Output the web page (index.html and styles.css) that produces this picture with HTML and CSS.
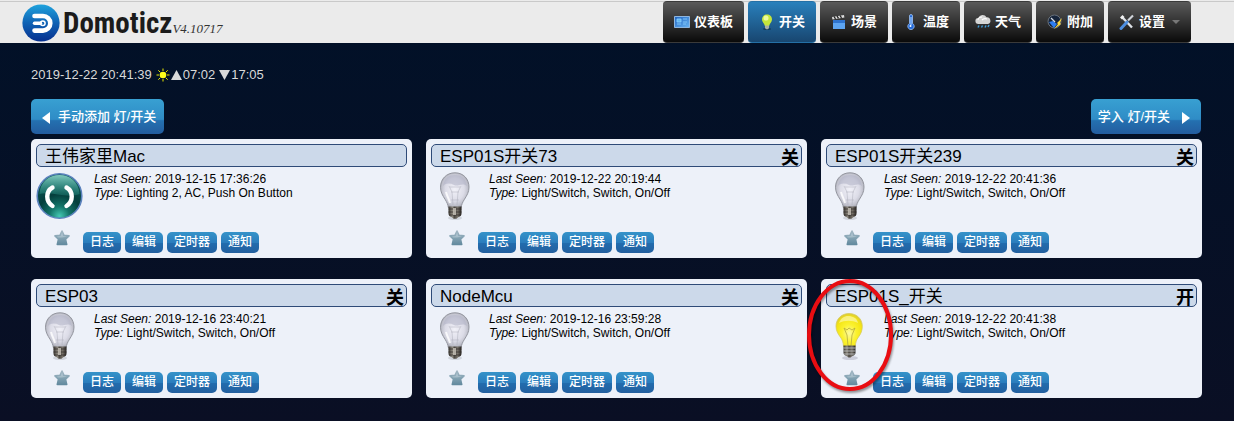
FILE: index.html
```html
<!DOCTYPE html>
<html lang="zh-CN">
<head>
<meta charset="utf-8">
<title>Domoticz</title>
<link rel="stylesheet" href="styles.css">
</head>
<body>
<svg class="sprite" aria-hidden="true">
  <defs>
    <radialGradient id="glass" cx="50%" cy="48%" r="55%">
      <stop offset="0" stop-color="#f1f1f8"/><stop offset=".6" stop-color="#dcdce7"/><stop offset=".85" stop-color="#bfc0cb"/><stop offset="1" stop-color="#9c9ea8"/>
    </radialGradient>
    <radialGradient id="glow" cx="50%" cy="60%" r="60%">
      <stop offset="0" stop-color="#fdf9a0"/><stop offset=".45" stop-color="#fbf22f"/><stop offset=".85" stop-color="#f3e312"/><stop offset="1" stop-color="#d9c93a"/>
    </radialGradient>
    <linearGradient id="metal">
      <stop offset="0" stop-color="#37342f"/><stop offset=".3" stop-color="#8f8a80"/><stop offset=".45" stop-color="#4a4640"/><stop offset=".7" stop-color="#77726a"/><stop offset="1" stop-color="#25221f"/>
    </linearGradient>
    <linearGradient id="starfill" x2="0" y2="1">
      <stop offset="0" stop-color="#a3b7c4"/><stop offset=".5" stop-color="#84a3b3"/><stop offset="1" stop-color="#648b9f"/>
    </linearGradient>
    <linearGradient id="logofill" x2="0" y2="1">
      <stop offset="0" stop-color="#1fa3dd"/><stop offset=".5" stop-color="#0f62b4"/><stop offset="1" stop-color="#06308f"/>
    </linearGradient>
    <radialGradient id="orb" cx="50%" cy="95%" r="90%">
      <stop offset="0" stop-color="#43c8b2"/><stop offset=".25" stop-color="#137468"/><stop offset=".55" stop-color="#043e3c"/><stop offset="1" stop-color="#0d5c58"/>
    </radialGradient>
    <linearGradient id="shine" x2="0" y2="1">
      <stop offset="0" stop-color="#9fe3d6" stop-opacity=".8"/><stop offset="1" stop-color="#2fa697" stop-opacity=".3"/>
    </linearGradient>
    <linearGradient id="sky" x2="1" y2="1"><stop offset="0" stop-color="#1f63c0"/><stop offset="1" stop-color="#69b4f2"/></linearGradient>
  </defs>
  <symbol id="bulb-off" viewBox="0 0 48 48">
    <ellipse cx="24" cy="46" rx="7" ry="2" fill="#b5b9c2" opacity=".5"/>
    <path d="M24 .8C15.500.8 9.500 7 9.500 15.200c0 5 2.200 8.300 4.500 12 2 3.200 3 5.500 3.300 8.300h12.900c.3-2.800 1.300-5.100 3.300-8.300 2.300-3.700 4.500-7 4.500-12C38 7 32.500.8 24 .8z" fill="url(#glass)" stroke="#94969f" stroke-width="1"/>
    <path d="M12 14C13 6 18 3 24 3s11 3 12 11c-5-4-9 1-13-1s-8-2-11 1z" fill="#aeb0c4" opacity=".55"/>
    <path d="M18 14l3 6 1 13M30 14l-3 6-1 13M19 15h10M20 20h8M20 28h8" fill="none" stroke="#a5a8b4" stroke-width=".8" opacity=".55"/>
    <path d="M15 20c1 4 3 7 4 11" stroke="#fff" stroke-width="2" fill="none" opacity=".8"/>
    <path d="M17.500 34.500h13v7c0 2-1 3-3 3.500l-2 1.800h-3l-2-1.800c-2-.5-3-1.500-3-3.500z" fill="url(#metal)"/>
    <path d="M17.500 37h13M17.500 40h13M18 43h12" stroke="#2e2a27" stroke-width=".7"/>
    <path d="M22 36h3v7h-3z" fill="#ded9cf" opacity=".7"/>
  </symbol>
  <symbol id="bulb-on" viewBox="0 0 48 48">
    <ellipse cx="24" cy="46" rx="8" ry="2" fill="#aab" opacity=".5"/>
    <path d="M23 1.500C15.500 1.500 10 7 10 14.200c0 4.500 2 7.800 4.300 10.800 2 2.700 3 5.300 3.200 9.500h11.800c.2-4.200 1.200-6.800 3.200-9.500 2.300-3 3.800-6.300 3.800-10.800C36.300 7 30.800 1.500 23 1.500z" fill="url(#glow)" stroke="#d8cb5c" stroke-width=".8"/>
    <path d="M13 11c2-5 5-7 9-7 5 0 9 2 10 7-6-3-13-3-19 0z" fill="#fff" opacity=".45"/>
    <path d="M18 16l3 7 1 11M29 16l-3 7-1 11M18 16l3 2 2-2 3 2 3-2" fill="none" stroke="#b3a940" stroke-width=".8"/>
    <path d="M17.500 33.500h12v7c0 2-1 3-3 3.500l-2 1.500h-2l-2-1.500c-2-.5-3-1.500-3-3.500z" fill="url(#metal)"/>
    <path d="M17.500 36h12M17.500 39h12M18 42h11" stroke="#c7c9cc" stroke-width=".8"/>
  </symbol>
  <symbol id="star" viewBox="0 0 16 16">
    <path d="M8 1l2 4.400 5 .5-3.500 3.400 1.200 5.100H3.300l1.200-5.100L1 5.900l5-.5z" fill="url(#starfill)" stroke="url(#starfill)" stroke-width="1.600" stroke-linejoin="round"/>
    <path d="M8 2.500l1.300 3.500 3.700.5C9 7.500 6 8 3.500 7.200L3 6.500 6.600 6z" fill="#d3e0e8" opacity=".4"/>
  </symbol>
</svg>

<header class="topbar">
  <div class="brand">
    <svg class="brand-mark" viewBox="0 0 38 38" aria-hidden="true">
      <circle cx="19" cy="19" r="18.600" fill="url(#logofill)"/>
      <path d="M12.500 12H21a7.300 7.300 0 0 1 0 14.600h-8.500" fill="none" stroke="#fff" stroke-width="4.600" stroke-linecap="round"/>
      <path d="M12.500 19.300h6" stroke="#fff" stroke-width="3.400" stroke-linecap="round"/>
      <circle cx="20.800" cy="19.300" r="2.300" fill="none" stroke="#fff" stroke-width="1.500"/>
    </svg>
    <span class="brand-name">Domoticz</span>
    <span class="brand-version">V4.10717</span>
  </div>
  <nav class="menu">
    <a class="menu-item" href="#dashboard"><svg viewBox="0 0 16 16"><path d="M.5 2.500h15v11H.5z" fill="url(#sky)" stroke="#8eb6df"/><path d="M3 5h4v3H3zM3 10h4M9 5h4M9 8h4M9 10h3" fill="#62b7ef" stroke="#8bd0ff" stroke-width=".8"/></svg>仪表板</a>
    <a class="menu-item active" href="#switches"><svg viewBox="0 0 16 16"><ellipse cx="8" cy="15" rx="4" ry="1" fill="#123a5a"/><path d="M8 .5C5 .5 3 2.600 3 5.400 3 8 5.400 9.200 5.900 12h4.200C10.600 9.200 13 8 13 5.400 13 2.600 11 .5 8 .5z" fill="#c4e63b"/><ellipse cx="7" cy="4" rx="2.500" ry="2.600" fill="#ecfb9f"/><path d="M6 11.500h4V14l-1 1.200H7L6 14z" fill="#aab0a5"/></svg>开关</a>
    <a class="menu-item" href="#scenes"><svg viewBox="0 0 16 16"><path d="M2 6h12v9H2z" fill="#5da5f2"/><path d="M2 6h12v3H2z" fill="#2f74cf"/><path d="M1 3l12-2 .4 2.400L1.500 5.500z" fill="#ddd"/><path d="M3 2.500l1.500 2.400M6 2l1.500 2.400M9 1.500l1.500 2.400" stroke="#222" stroke-width="1.300"/></svg>场景</a>
    <a class="menu-item" href="#temperature"><svg viewBox="0 0 16 16"><path d="M6.500 2a1.500 1.500 0 0 1 3 0v7.500a3.200 3.200 0 1 1-3 0z" fill="#2268d8" stroke="#9fc6fa" stroke-width=".8"/><path d="M8 3v8" stroke="#bfe0ff"/><circle cx="7.500" cy="12" r="1" fill="#fff"/></svg>温度</a>
    <a class="menu-item" href="#weather"><svg viewBox="0 0 16 16"><path d="M3.500 10a3 3 0 0 1-.2-6A4.500 4.500 0 0 1 11.500 3.200 3.500 3.500 0 0 1 13 10z" fill="#d4d4d4"/><path d="M3 6a4 3 0 0 1 4-3M7 6a4 3 0 0 1 5-1" stroke="#fff" stroke-width="1.200" fill="none"/><path d="M4 11.500l-1 2M7.500 11.500l-1 2M11 11.500l-1 2M14 11l-1 2" stroke="#3f9bd8" stroke-width="1.400"/></svg>天气</a>
    <a class="menu-item" href="#utility"><svg viewBox="0 0 16 16"><circle cx="7.500" cy="7.500" r="6.500" fill="#17253b" stroke="#68717c"/><path d="M2 8l5 6 3-4-4-3z" fill="#2d7df0"/><path d="M4 4l4 4" stroke="#d5dbe3" stroke-width="1.200"/><path d="M15 4l-5 5 1 1-4 5 7-5-1-1z" fill="#ffd83b"/></svg>附加</a>
    <a class="menu-item" href="#setup"><svg viewBox="0 0 16 16"><path d="M3 3l10 10.500" stroke="#dfe3e8" stroke-width="2.400"/><path d="M1 3.500L3.500 1l2 2-2.500 2.500z" fill="#f1f1f1"/><path d="M14 1.500l-5 5" stroke="#d0d4da" stroke-width="2.200"/><path d="M8 8l-6 6.500" stroke="#4d8ee0" stroke-width="3" stroke-linecap="round"/></svg>设置<i class="caret"></i></a>
  </nav>
</header>

<main class="page">
  <p class="clock"><span>2019-12-22 20:41:39</span>
    <svg class="sun" viewBox="0 0 14 14" role="img" aria-label="日照"><circle cx="7" cy="7" r="3.300" fill="#ffff1a"/><path d="M7 .5v2.500M7 11v2.500M.5 7H3M11 7h2.500M2.300 2.300l1.900 1.900M9.800 9.800l1.900 1.900M11.700 2.300L9.800 4.200M4.200 9.800l-1.900 1.900" stroke="#e8e800" stroke-width="1"/></svg>
    <span class="sun-time"><svg viewBox="0 0 11 10" aria-hidden="true"><path d="M5.500 0L11 10H0z"/></svg>07:02</span>
    <span class="sun-time"><svg viewBox="0 0 11 10" aria-hidden="true"><path d="M0 0h11L5.500 10z"/></svg>17:05</span></p>

  <div class="toolbar">
    <button class="tool" type="button"><svg viewBox="0 0 8 12" aria-hidden="true"><path d="M8 0v12L0 6z"/></svg>手动添加 灯/开关</button>
    <button class="tool tool-next" type="button">学入 灯/开关<svg viewBox="0 0 8 12" aria-hidden="true"><path d="M0 0v12l8-6z"/></svg></button>
  </div>

  <div class="devices">
    <article class="card">
      <header class="card-head"><h2>王伟家里Mac</h2></header>
      <svg class="device-icon" viewBox="0 0 48 48" role="img" aria-label="按钮">
        <circle cx="23.500" cy="24" r="22.300" fill="url(#orb)" stroke="#5b82bd" stroke-width="1.600"/>
        <path d="M3.500 22C4 10 13 3 23.500 3S43 10 43.500 22C32 27 15 19 3.500 22z" fill="url(#shine)"/>
        <path d="M16.500 15.500c-7 4-7 14 0 18.500M30.500 15.500c7 4 7 14 0 18.500" fill="none" stroke="#fff" stroke-width="4.400" stroke-linecap="round"/>
      </svg>
      <div class="info"><p><em>Last Seen:</em> 2019-12-15 17:36:26</p><p><em>Type:</em> Lighting 2, AC, Push On Button</p></div>
      <svg class="star"><use href="#star"/></svg>
      <div class="actions"><button type="button">日志</button><button type="button">编辑</button><button type="button">定时器</button><button type="button">通知</button></div>
    </article>
    <article class="card">
      <header class="card-head"><h2>ESP01S开关73</h2><strong>关</strong></header>
      <svg class="device-icon"><use href="#bulb-off"/></svg>
      <div class="info"><p><em>Last Seen:</em> 2019-12-22 20:19:44</p><p><em>Type:</em> Light/Switch, Switch, On/Off</p></div>
      <svg class="star"><use href="#star"/></svg>
      <div class="actions"><button type="button">日志</button><button type="button">编辑</button><button type="button">定时器</button><button type="button">通知</button></div>
    </article>
    <article class="card">
      <header class="card-head"><h2>ESP01S开关239</h2><strong>关</strong></header>
      <svg class="device-icon"><use href="#bulb-off"/></svg>
      <div class="info"><p><em>Last Seen:</em> 2019-12-22 20:41:36</p><p><em>Type:</em> Light/Switch, Switch, On/Off</p></div>
      <svg class="star"><use href="#star"/></svg>
      <div class="actions"><button type="button">日志</button><button type="button">编辑</button><button type="button">定时器</button><button type="button">通知</button></div>
    </article>
    <article class="card">
      <header class="card-head"><h2>ESP03</h2><strong>关</strong></header>
      <svg class="device-icon"><use href="#bulb-off"/></svg>
      <div class="info"><p><em>Last Seen:</em> 2019-12-16 23:40:21</p><p><em>Type:</em> Light/Switch, Switch, On/Off</p></div>
      <svg class="star"><use href="#star"/></svg>
      <div class="actions"><button type="button">日志</button><button type="button">编辑</button><button type="button">定时器</button><button type="button">通知</button></div>
    </article>
    <article class="card">
      <header class="card-head"><h2>NodeMcu</h2><strong>关</strong></header>
      <svg class="device-icon"><use href="#bulb-off"/></svg>
      <div class="info"><p><em>Last Seen:</em> 2019-12-16 23:59:28</p><p><em>Type:</em> Light/Switch, Switch, On/Off</p></div>
      <svg class="star"><use href="#star"/></svg>
      <div class="actions"><button type="button">日志</button><button type="button">编辑</button><button type="button">定时器</button><button type="button">通知</button></div>
    </article>
    <article class="card">
      <header class="card-head"><h2>ESP01S_开关</h2><strong>开</strong></header>
      <svg class="device-icon"><use href="#bulb-on"/></svg>
      <div class="info"><p><em>Last Seen:</em> 2019-12-22 20:41:38</p><p><em>Type:</em> Light/Switch, Switch, On/Off</p></div>
      <svg class="star"><use href="#star"/></svg>
      <div class="actions"><button type="button">日志</button><button type="button">编辑</button><button type="button">定时器</button><button type="button">通知</button></div>
      <svg class="highlight" viewBox="0 0 88 114" aria-hidden="true"><ellipse cx="43" cy="56" rx="41" ry="54" fill="none" stroke="#e90d12" stroke-width="4"/></svg>
    </article>
  </div>
</main>
</body>
</html>
```
FILE: styles.css
```css
* { box-sizing: border-box; }

body {
  margin: 0;
  min-height: 100vh;
  background: linear-gradient(#011128, #0a0f24);
  color: #000;
  font-family: "Liberation Sans", "Noto Sans CJK SC", sans-serif;
  font-size: 12px;
}

h2, p { margin: 0; }
svg { flex: none; }
button { font-family: inherit; cursor: pointer; }

.sprite { position: absolute; width: 0; height: 0; }

.topbar {
  display: flex;
  justify-content: space-between;
  height: 43px;
  padding: 0 43px 0 22px;
  background: linear-gradient(#c9c9c9, #c9c9c9) 0 3px / 100% 1px no-repeat #ebebeb;
  background-position: 0 1px;
}

.brand { display: flex; align-items: baseline; padding-top: 4px; }
.brand-mark { width: 38px; height: 38px; align-self: flex-start; }
.brand-name {
  margin-left: 3px;
  color: #1b1b1b;
  font: bold 29px/38px "Roboto Condensed", "Liberation Sans Narrow", "Liberation Sans", sans-serif;
}
.brand-version {
  color: #333;
  font: italic 13px/18px "Liberation Serif", serif;
}

.menu { display: flex; gap: 4px; padding-top: 1px; }
.menu-item {
  display: flex;
  align-items: center;
  gap: 4px;
  padding: 0 11px;
  border: 1px solid #3a3a3a;
  border-width: 1px 0;
  border-radius: 4px;
  background: linear-gradient(#5a5a5a, #0a0a0a);
  color: #fff;
  font-size: 13px;
  font-weight: bold;
  line-height: 20px;
  text-decoration: none;
}
.menu-item svg { width: 16px; height: 16px; }
.menu-item.active { border-color: #2470a6; background: linear-gradient(#2980bc, #184670); }
.caret {
  margin-left: 3px;
  border: 4px solid transparent;
  border-top-color: #777;
  border-bottom: 0;
}

.page { padding: 23px 32px 0 31px; }

.clock {
  display: flex;
  align-items: center;
  gap: 4px;
  color: #d9d9d9;
  font-size: 13px;
  line-height: 18px;
}
.sun { width: 14px; height: 14px; margin-right: -3px; }
.sun-time { display: flex; align-items: center; gap: 1px; }
.sun-time svg { width: 11px; height: 10px; fill: #d9d9d9; }

.toolbar { display: flex; justify-content: space-between; padding: 15px 1px 5px 0; }
.tool {
  display: flex;
  align-items: center;
  gap: 8px;
  height: 35px;
  padding: 0 8px 3px 11px;
  border: 0;
  border-radius: 5px;
  background: linear-gradient(#38a0d2, #2f8cc6 58%, #2470b0 62%, #235c9f);
  color: #fff;
  font-size: 13px;
  font-weight: 500;
}
.tool svg { width: 8px; height: 12px; margin-top: 5px; fill: #fff; }
.tool-next { gap: 12px; padding: 0 11px 3px 7px; }

.devices {
  display: grid;
  grid-template-columns: repeat(3, 1fr);
  gap: 21px 14px;
}
.card {
  position: relative;
  display: grid;
  grid-template-columns: 48px 1fr;
  grid-template-rows: 23px 48px auto;
  row-gap: 5px;
  padding: 5px;
  border-radius: 5px;
  background: #edf1f9;
}
.card-head {
  grid-column: 1 / -1;
  display: flex;
  justify-content: space-between;
  padding: 0 2px 0 8px;
  border: 1px solid #2f4b78;
  border-radius: 5px;
  background: #ccd9ea;
}
.card-head h2 { font-size: 17px; font-weight: normal; line-height: 23px; }
.card-head strong { font-size: 18px; line-height: 27px; }

.device-icon { width: 48px; height: 48px; }
.info { padding: 0 0 0 10px; line-height: 14px; }
.star { width: 16px; height: 16px; margin: 5px 0 0 18px; }
.actions { display: flex; gap: 4px; padding: 7px 0 0 0; margin-left: -1px; }
.actions button {
  height: 21px;
  padding: 0 7px 1px;
  border: 0;
  border-radius: 5px;
  background: linear-gradient(#3593c9, #2b7dbd 50%, #226dae 51%, #235f9f);
  color: #fff;
  font-size: 12px;
  font-weight: 500;
  line-height: 20px;
}

.highlight {
  position: absolute;
  top: 0;
  left: -14px;
  width: 88px;
  height: 114px;
  filter: drop-shadow(1px 2px 1px rgba(0, 0, 0, .4));
  pointer-events: none;
}
```
